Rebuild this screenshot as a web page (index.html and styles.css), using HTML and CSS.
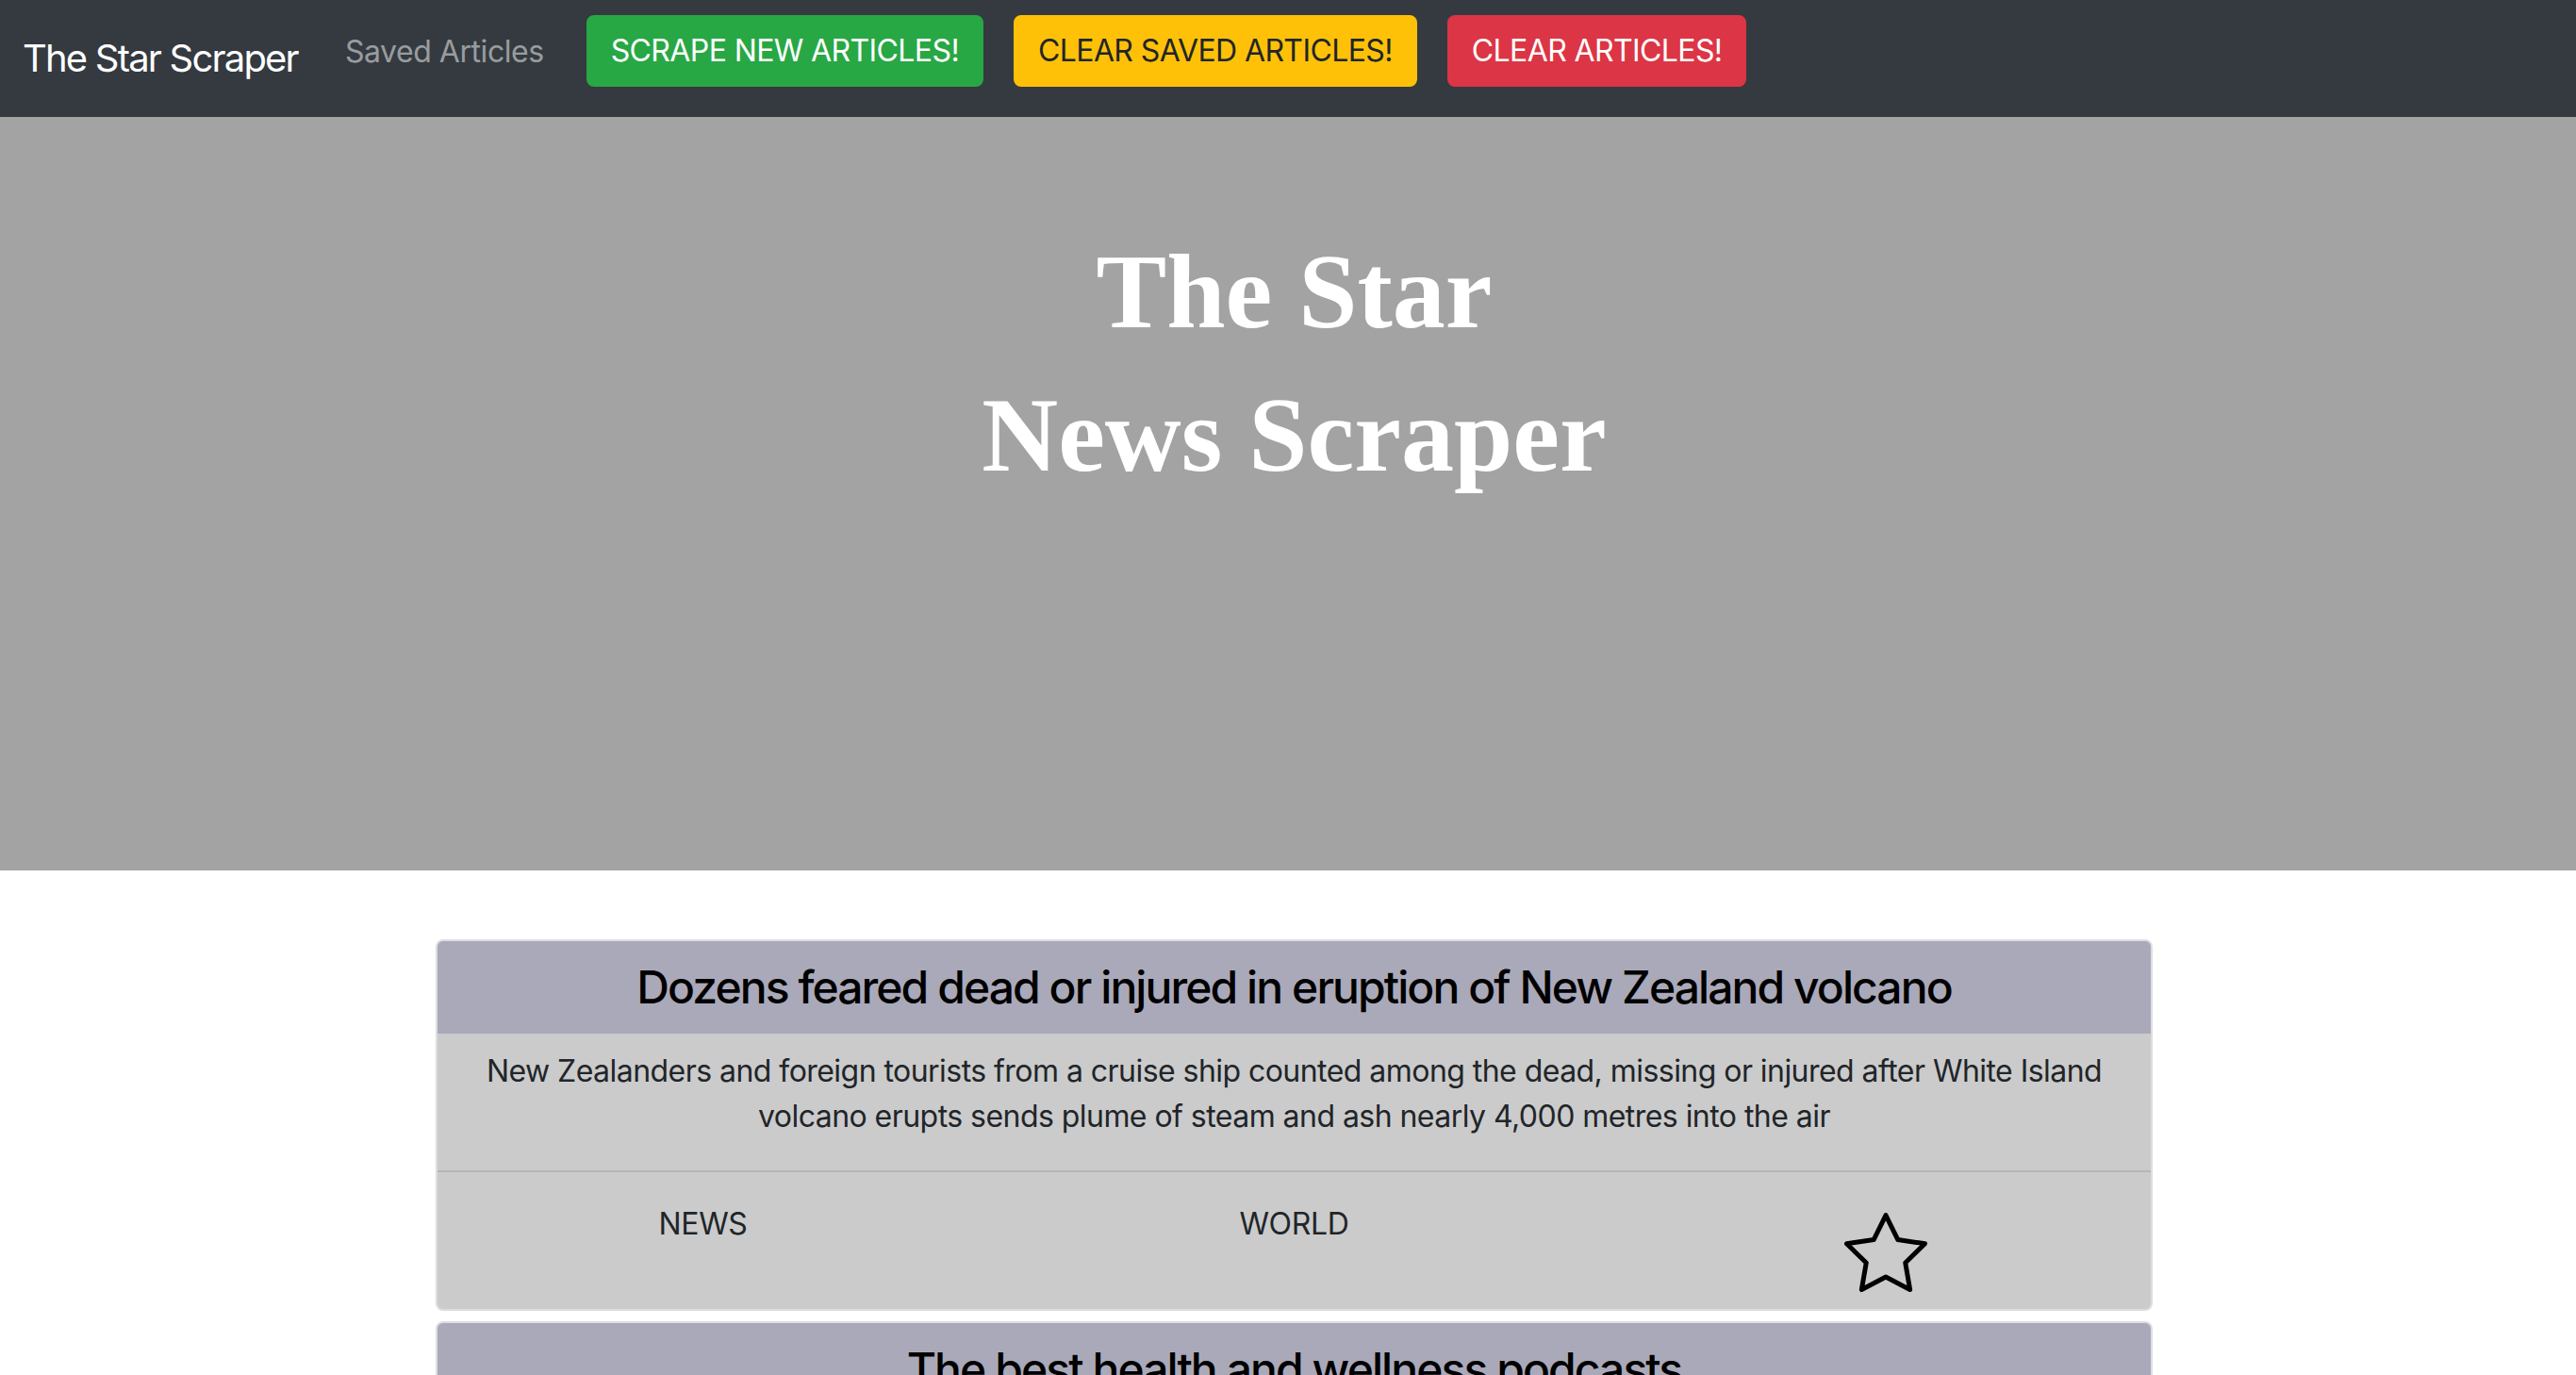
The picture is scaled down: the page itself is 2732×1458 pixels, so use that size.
FILE: index.html
```html
<!DOCTYPE html>
<html lang="en">
<head>
<meta charset="utf-8">
<title>The Star Scraper</title>
<link rel="stylesheet" href="styles.css">
</head>
<body>
<nav class="navbar">
  <a class="brand" href="#">The Star Scraper</a>
  <a class="nav-link" href="#">Saved Articles</a>
  <button class="btn btn-green">SCRAPE NEW ARTICLES!</button>
  <button class="btn btn-yellow">CLEAR SAVED ARTICLES!</button>
  <button class="btn btn-red">CLEAR ARTICLES!</button>
</nav>

<header class="hero">
  <h1 class="hero-title">The Star<br>News Scraper</h1>
</header>

<main class="articles">
  <article class="card">
    <div class="card-header">
      <h4 class="card-title">Dozens feared dead or injured in eruption of New Zealand volcano</h4>
    </div>
    <div class="card-body">
      <p class="card-text">New Zealanders and foreign tourists from a cruise ship counted among the dead, missing or injured after White Island volcano erupts sends plume of steam and ash nearly 4,000 metres into the air</p>
    </div>
    <div class="card-footer">
      <div class="footer-row">
        <div class="footer-col">NEWS</div>
        <div class="footer-col">WORLD</div>
        <div class="footer-col">
          <svg class="star" viewBox="1.4 1.4 21.2 20.2" width="88" height="84" aria-hidden="true">
            <polygon points="12 2 15.09 8.26 22 9.27 17 14.14 18.18 21.02 12 17.77 5.82 21.02 7 14.14 2 9.27 8.91 8.26 12 2" fill="none" stroke="#000" stroke-width="1.2" stroke-linejoin="round" stroke-linecap="round"/>
          </svg>
        </div>
      </div>
    </div>
  </article>

  <article class="card">
    <div class="card-header">
      <h4 class="card-title">The best health and wellness podcasts</h4>
    </div>
    <div class="card-body">
      <p class="card-text">Listen to these shows for tips on staying healthy in body and mind</p>
    </div>
    <div class="card-footer">
      <div class="footer-row">
        <div class="footer-col">LIFE</div>
        <div class="footer-col">HEALTH</div>
        <div class="footer-col">
          <svg class="star" viewBox="1.4 1.4 21.2 20.2" width="88" height="84" aria-hidden="true">
            <polygon points="12 2 15.09 8.26 22 9.27 17 14.14 18.18 21.02 12 17.77 5.82 21.02 7 14.14 2 9.27 8.91 8.26 12 2" fill="none" stroke="#000" stroke-width="1.2" stroke-linejoin="round" stroke-linecap="round"/>
          </svg>
        </div>
      </div>
    </div>
  </article>
</main>
</body>
</html>
```

FILE: styles.css
```css
* { box-sizing: border-box; }

body {
  margin: 0;
  font-family: Inter, "Noto Sans", "Liberation Sans", sans-serif;
  color: #212529;
  background: #fff;
}

.navbar {
  display: flex;
  align-items: flex-start;
  height: 124px;
  padding: 16px 0 0 24px;
  background: #343a40;
}

.brand {
  margin-top: 16px;
  font-size: 40px;
  line-height: 60px;
  letter-spacing: -0.045em;
  color: #fff;
  text-decoration: none;
  white-space: nowrap;
}

.nav-link {
  margin: 15px 45px 0 50px;
  font-size: 32px;
  line-height: 48px;
  letter-spacing: -0.014em;
  color: rgba(255, 255, 255, 0.5);
  text-decoration: none;
  white-space: nowrap;
}

.btn {
  margin-right: 32px;
  padding: 12px 24px;
  border: 2px solid transparent;
  border-radius: 8px;
  font-family: inherit;
  font-size: 32px;
  line-height: 48px;
  letter-spacing: -0.019em;
  white-space: nowrap;
  cursor: pointer;
}

.btn-green { background: #28a745; border-color: #28a745; color: #fff; }
.btn-yellow { background: #ffc107; border-color: #ffc107; color: #212529; }
.btn-red { background: #dc3545; border-color: #dc3545; color: #fff; }

.hero {
  height: 799px;
  padding-top: 109px;
  padding-left: 13px;
  background: #a3a3a3;
  text-align: center;
}

.hero-title {
  margin: 0;
  font-family: "Liberation Serif", "Times New Roman", serif;
  font-weight: bold;
  font-size: 112px;
  line-height: 152px;
  color: #fff;
}

.articles {
  width: 1821px;
  margin: 73px 0 0 462px;
}

.card {
  margin-bottom: 11px;
  border: 2px solid #dcdde0;
  border-radius: 8px;
  overflow: hidden;
  background: #cbcbcb;
}

.card-header {
  padding: 20px 40px;
  background: #aaa9b9;
  text-align: center;
}

.card-title {
  margin: 0;
  font-size: 48px;
  font-weight: 500;
  line-height: 57.6px;
  letter-spacing: -0.04em;
  color: #000;
}

.card-body {
  padding: 16px 40px 33px;
  text-align: center;
}

.card-text {
  margin: 0;
  font-size: 32px;
  line-height: 48px;
  letter-spacing: -0.017em;
}

.card-footer {
  padding: 31px 0 18px;
  border-top: 2px solid #b6b6b6;
}

.footer-row {
  display: grid;
  grid-template-columns: repeat(3, 1fr);
  margin: 0 -32px;
}

.footer-col {
  font-size: 32px;
  line-height: 48px;
  letter-spacing: -0.01em;
  text-align: center;
}

.star {
  display: block;
  margin: 12px auto 0;
}
```
